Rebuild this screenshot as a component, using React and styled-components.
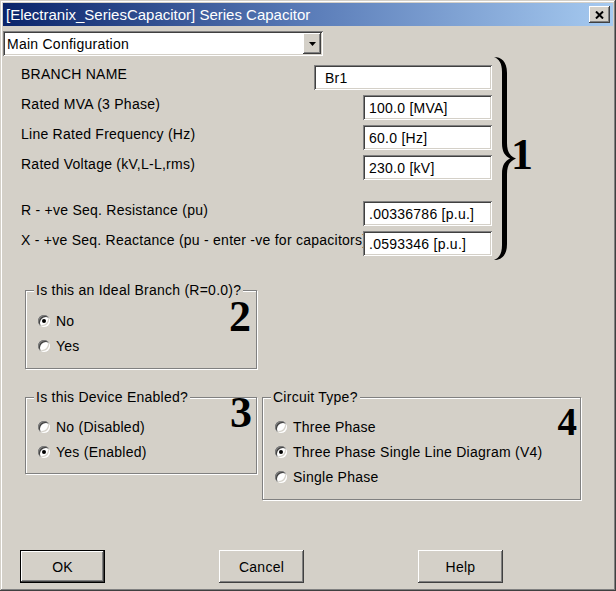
import styled, { createGlobalStyle } from 'styled-components';

const GlobalStyle = createGlobalStyle`
  html, body {
    margin: 0;
    padding: 0;
    background: #d4d0c8;
  }
  body {
    font-family: "Liberation Sans", Arial, sans-serif;
    font-size: 14px;
    letter-spacing: 0.25px;
    color: #000;
  }
`;

const raised = `
  box-shadow: inset -1px -1px 0 #404040, inset 1px 1px 0 #fff,
    inset -2px -2px 0 #808080, inset 2px 2px 0 #d4d0c8;
`;

const sunken = `
  box-shadow: inset 1px 1px 0 #808080, inset -1px -1px 0 #fff,
    inset 2px 2px 0 #404040, inset -2px -2px 0 #d4d0c8;
`;

const Window = styled.div`
  box-sizing: border-box;
  width: 616px;
  height: 591px;
  padding: 3px;
  display: flex;
  flex-direction: column;
  background: #d4d0c8;
  box-shadow: inset -1px -1px 0 #404040, inset 1px 1px 0 #d4d0c8,
    inset -2px -2px 0 #808080, inset 2px 2px 0 #fff;
`;

const TitleBar = styled.div`
  height: 23px;
  display: flex;
  align-items: center;
  justify-content: space-between;
  padding: 0 3px 0 3px;
  background: linear-gradient(to right, #0a246a 0%, #5a7cb8 50%, #a6caf0 100%);
  color: #fff;
  font-size: 15px;
  letter-spacing: 0;
`;

const CloseButton = styled.div`
  box-sizing: border-box;
  width: 21px;
  height: 17px;
  display: flex;
  align-items: center;
  justify-content: center;
  background: #d4d0c8;
  ${raised}
`;

const Dropdown = styled.div`
  box-sizing: border-box;
  margin-top: 5px;
  width: 320px;
  height: 25px;
  padding: 2px;
  display: flex;
  align-items: center;
  background: #fff;
  ${sunken}
`;

const DropdownText = styled.span`
  flex: 1;
  padding-left: 2px;
`;

const DropdownArrow = styled.div`
  box-sizing: border-box;
  width: 18px;
  height: 21px;
  display: flex;
  align-items: center;
  justify-content: center;
  background: #d4d0c8;
  ${raised}
`;

const FieldsArea = styled.div`
  display: flex;
  align-items: flex-start;
  margin-top: 9px;
  padding-left: 18px;
`;

const FieldList = styled.div`
  width: 471px;
  display: flex;
  flex-direction: column;
  gap: 5px;
`;

const FieldRow = styled.div`
  display: flex;
  justify-content: space-between;
  height: 25px;
  margin-top: ${(p) => p.$extra || 0}px;
`;

const FieldLabel = styled.span`
  flex: 1;
  min-width: 0;
  line-height: 19px;
  white-space: nowrap;
  overflow: hidden;
`;

const TextBox = styled.input`
  box-sizing: border-box;
  width: ${(p) => p.$w}px;
  height: 25px;
  margin: 0;
  border: none;
  padding: 0 0 0 ${(p) => p.$indent}px;
  font-family: "Liberation Sans", Arial, sans-serif;
  font-size: 14px;
  letter-spacing: 0.25px;
  color: #000;
  background: #fff;
  outline: none;
  ${sunken}
`;

const Brace = styled.svg`
  margin: -8px 0 -4px 2px;
  flex-shrink: 0;
`;

const Marker = styled.div`
  font-family: "Liberation Serif", "Times New Roman", serif;
  font-weight: bold;
  font-size: ${(p) => p.$size || 44}px;
  line-height: 44px;
  letter-spacing: 0;
  margin-top: ${(p) => p.$mt}px;
  margin-left: ${(p) => p.$ml || 0}px;
  align-self: flex-start;
`;

const Groups = styled.div`
  margin-top: 34px;
  padding-left: 22px;
  display: flex;
  flex-direction: column;
  gap: 28px;
`;

const GroupRow = styled.div`
  display: flex;
  align-items: flex-start;
  gap: 5px;
`;

const GroupBox = styled.div`
  box-sizing: border-box;
  width: ${(p) => p.$w}px;
  border: 1px solid #808080;
  box-shadow: inset 1px 1px 0 #fff, 1px 1px 0 #fff;
`;

const Caption = styled.div`
  width: fit-content;
  margin: -9px 0 0 8px;
  padding: 0 2px;
  line-height: 16px;
  background: #d4d0c8;
`;

const GroupBody = styled.div`
  display: flex;
  justify-content: space-between;
  padding: ${(p) => p.$pt}px ${(p) => p.$pr}px ${(p) => p.$pb}px 12px;
`;

const RadioList = styled.div`
  display: flex;
  flex-direction: column;
`;

const RadioRow = styled.label`
  display: flex;
  align-items: center;
  gap: 6px;
  height: 25px;
`;

const RadioDot = styled.span`
  position: relative;
  box-sizing: border-box;
  width: 12px;
  height: 12px;
  border-radius: 50%;
  background: #fff;
  box-shadow: inset 1px 1px 0 #808080, inset -1px -1px 0 #fff,
    inset 2px 2px 0 #404040, inset -2px -2px 0 #d4d0c8;

  &::after {
    content: '';
    display: ${(p) => (p.$on ? 'block' : 'none')};
    position: absolute;
    left: 4px;
    top: 4px;
    width: 4px;
    height: 4px;
    border-radius: 50%;
    background: #000;
  }
`;

const ButtonRow = styled.div`
  margin-top: auto;
  margin-bottom: 5px;
  padding-left: 17px;
  display: flex;
  gap: 114px;
`;

const PushButton = styled.button`
  box-sizing: border-box;
  width: 85px;
  height: 33px;
  margin: 0;
  padding: 0;
  font-family: "Liberation Sans", Arial, sans-serif;
  font-size: 14px;
  letter-spacing: 0.25px;
  color: #000;
  background: #d4d0c8;
  border: ${(p) => (p.$default ? '1px solid #000' : 'none')};
  ${raised}
`;

const Radio = ({ on, children }) => (
  <RadioRow>
    <RadioDot $on={on} />
    {children}
  </RadioRow>
);

const fields = [
  { label: 'BRANCH NAME', value: 'Br1', w: 178, indent: 11 },
  { label: 'Rated MVA (3 Phase)', value: '100.0 [MVA]', w: 129, indent: 6 },
  { label: 'Line Rated Frequency (Hz)', value: '60.0 [Hz]', w: 129, indent: 6 },
  { label: 'Rated Voltage (kV,L-L,rms)', value: '230.0 [kV]', w: 129, indent: 6 },
  { label: 'R - +ve Seq. Resistance (pu)', value: '.00336786 [p.u.]', w: 129, indent: 6, extra: 16 },
  { label: 'X - +ve Seq. Reactance (pu - enter -ve for capacitors)', value: '.0593346 [p.u.]', w: 129, indent: 6 },
];

const App = () => {
  return (
    <>
      <GlobalStyle />
      <Window>
        <TitleBar>
          <span>[Electranix_SeriesCapacitor] Series Capacitor</span>
          <CloseButton>
            <svg width="9" height="8" viewBox="0 0 9 8">
              <path d="M1 0.5 L8 7.5 M8 0.5 L1 7.5" stroke="#000" strokeWidth="2" />
            </svg>
          </CloseButton>
        </TitleBar>

        <Dropdown>
          <DropdownText>Main Configuration</DropdownText>
          <DropdownArrow>
            <svg width="7" height="4" viewBox="0 0 7 4">
              <polygon points="0,0 7,0 3.5,4" fill="#000" />
            </svg>
          </DropdownArrow>
        </Dropdown>

        <FieldsArea>
          <FieldList>
            {fields.map((f) => (
              <FieldRow key={f.label} $extra={f.extra}>
                <FieldLabel>{f.label}</FieldLabel>
                <TextBox readOnly value={f.value} $w={f.w} $indent={f.indent} />
              </FieldRow>
            ))}
          </FieldList>
          <Brace width="22" height="203" viewBox="0 0 22 203">
            <path
              d="M0 0 C7 0 13 4 13 16 L13 86 C13 95 16 99 22 101.5 C16 104 13 108 13 117 L13 187 C13 199 7 203 0 203 C5 201 8 197 8 188 L8 117 C8 108 11 104 16 101.5 C11 99 8 95 8 86 L8 15 C8 6 5 2 0 0 Z"
              fill="#000"
            />
          </Brace>
          <Marker $mt={68} $ml={-5}>1</Marker>
        </FieldsArea>

        <Groups>
          <GroupBox $w={232}>
            <Caption>Is this an Ideal Branch (R=0.0)?</Caption>
            <GroupBody $pt={10} $pr={5} $pb={10}>
              <RadioList>
                <Radio on>No</Radio>
                <Radio>Yes</Radio>
              </RadioList>
              <Marker $mt={-13}>2</Marker>
            </GroupBody>
          </GroupBox>

          <GroupRow>
            <GroupBox $w={232}>
              <Caption>Is this Device Enabled?</Caption>
              <GroupBody $pt={9} $pr={4} $pb={9}>
                <RadioList>
                  <Radio>No (Disabled)</Radio>
                  <Radio on>Yes (Enabled)</Radio>
                </RadioList>
                <Marker $mt={-23}>3</Marker>
              </GroupBody>
            </GroupBox>

            <GroupBox $w={319}>
              <Caption>Circuit Type?</Caption>
              <GroupBody $pt={9} $pr={3} $pb={10}>
                <RadioList>
                  <Radio>Three Phase</Radio>
                  <Radio on>Three Phase Single Line Diagram (V4)</Radio>
                  <Radio>Single Phase</Radio>
                </RadioList>
                <Marker $mt={-14} $size={39}>4</Marker>
              </GroupBody>
            </GroupBox>
          </GroupRow>
        </Groups>

        <ButtonRow>
          <PushButton $default>OK</PushButton>
          <PushButton>Cancel</PushButton>
          <PushButton>Help</PushButton>
        </ButtonRow>
      </Window>
    </>
  );
};

export default App;
